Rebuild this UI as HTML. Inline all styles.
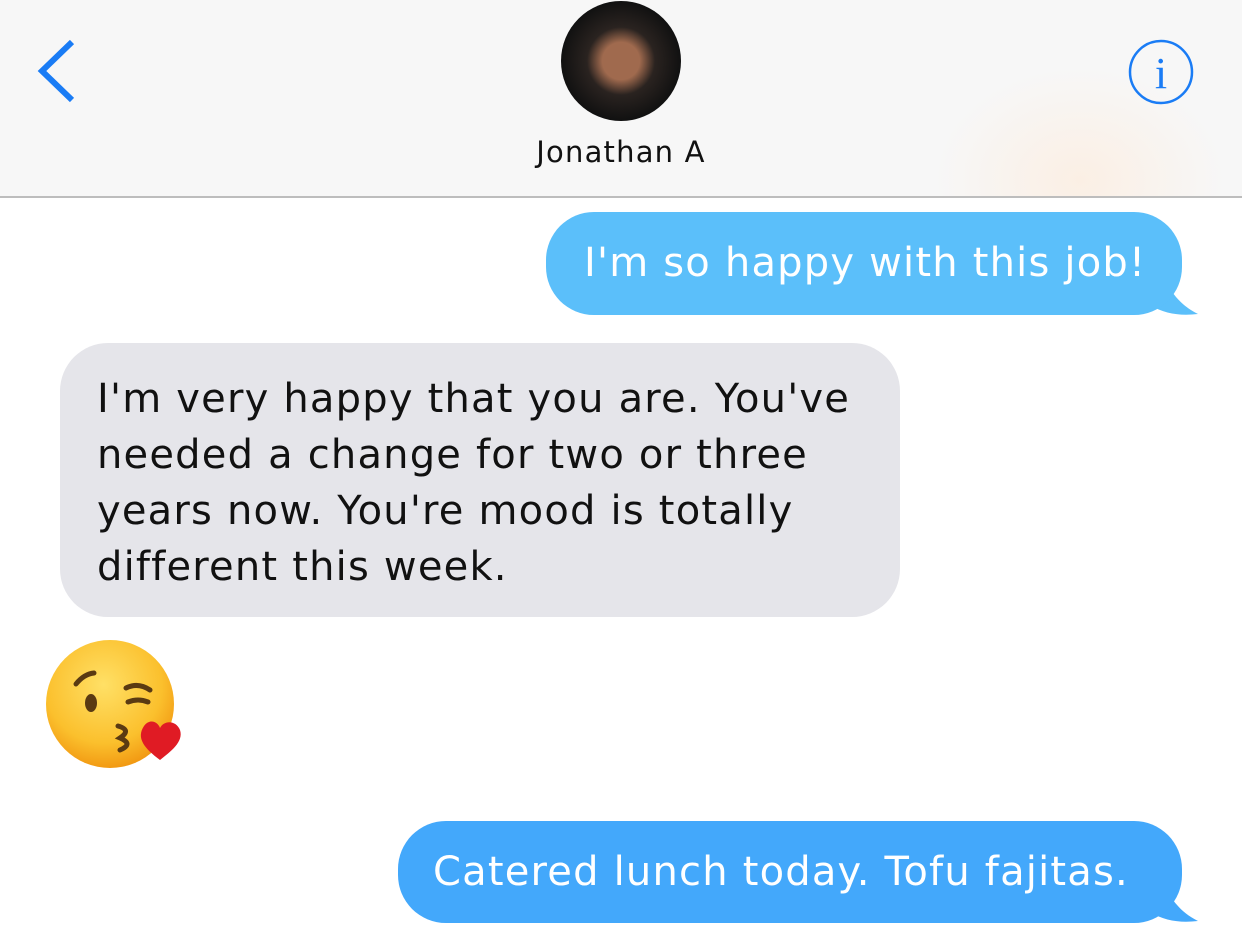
<!DOCTYPE html>
<html><head><style>
*{margin:0;padding:0;box-sizing:border-box}
body{width:1242px;height:942px;background:#fff;font-family:"DejaVu Sans",sans-serif;position:relative;overflow:hidden}
.hdr{position:absolute;left:0;top:0;width:1242px;height:198px;background:radial-gradient(ellipse 180px 140px at 1080px 180px,#fbefe4,#f7f7f7 80%);border-bottom:2px solid #bdbdbd}
.b{position:absolute;border-radius:48px;font-size:40px;letter-spacing:1.2px;white-space:nowrap}
.tail{position:absolute}
</style></head><body>
<div class="hdr">
<svg style="position:absolute;left:34px;top:38px" width="44" height="66" viewBox="0 0 44 66"><path d="M38 4 L8 33 L38 62" fill="none" stroke="#1a7cf5" stroke-width="6"/></svg>
<div style="position:absolute;left:561px;top:1px;width:120px;height:120px;border-radius:50%;background:radial-gradient(circle at 50% 50%,#a06a4e 0 22%,#2a2320 40%,#111 70%)"></div>
<div style="position:absolute;left:0;width:1242px;top:135px;text-align:center;font-size:29px;letter-spacing:1.2px;color:#111">Jonathan A</div>
<svg style="position:absolute;left:1127px;top:38px" width="68" height="68" viewBox="0 0 68 68"><circle cx="34" cy="34" r="31" fill="none" stroke="#1a7cf5" stroke-width="2.5"/><text x="34" y="50" text-anchor="middle" font-family="Liberation Serif" font-size="44" fill="#1a7cf5">i</text></svg>
</div>
<svg class="tail" style="left:1150px;top:270px" width="50" height="48"><path d="M0 0 C20 10 20 30 48 44 C30 46 15 44 0 35Z" fill="#5bbffa"/></svg>
<div class="b" style="left:546px;top:212px;width:636px;height:103px;background:#5bbffa;color:#fff;padding:28px 0 0 38px">I'm so happy with this job!</div>
<div class="b" style="left:60px;top:343px;width:840px;height:274px;background:#e5e5ea;color:#111;padding:28px 0 0 37px;line-height:56px">I'm very happy that you are. You've<br>needed a change for two or three<br>years now. You're mood is totally<br>different this week.</div>
<svg style="position:absolute;left:44px;top:638px" width="140" height="135" viewBox="0 0 140 135">
<defs><radialGradient id="g" cx="45%" cy="35%" r="65%"><stop offset="0" stop-color="#ffe066"/><stop offset="0.7" stop-color="#fbc02d"/><stop offset="1" stop-color="#f29a13"/></radialGradient></defs>
<circle cx="66" cy="66" r="64" fill="url(#g)"/>
<path d="M32 46 Q40 36 50 35" stroke="#5a3a12" stroke-width="5" fill="none" stroke-linecap="round"/>
<ellipse cx="47" cy="65" rx="6" ry="9" fill="#5a3a12"/>
<path d="M82 50 Q94 44 106 52" stroke="#5a3a12" stroke-width="5" fill="none" stroke-linecap="round"/>
<path d="M84 64 Q94 60 104 64" stroke="#5a3a12" stroke-width="5" fill="none" stroke-linecap="round"/>
<path d="M74 88 Q88 92 76 100 Q90 106 76 112" stroke="#5a3a12" stroke-width="5" fill="none" stroke-linecap="round"/>
<path d="M116 122 C100 110 92 100 100 88 C106 80 114 84 116 90 C120 82 132 82 136 92 C140 104 126 114 116 122Z" fill="#e01b24"/>
</svg>
<svg class="tail" style="left:1150px;top:877px" width="50" height="48"><path d="M0 0 C20 10 20 30 48 44 C30 46 15 44 0 35Z" fill="#43a8fb"/></svg>
<div class="b" style="left:398px;top:821px;width:784px;height:102px;background:#43a8fb;color:#fff;padding:28px 0 0 35px">Catered lunch today. Tofu fajitas.</div>
</body></html>
